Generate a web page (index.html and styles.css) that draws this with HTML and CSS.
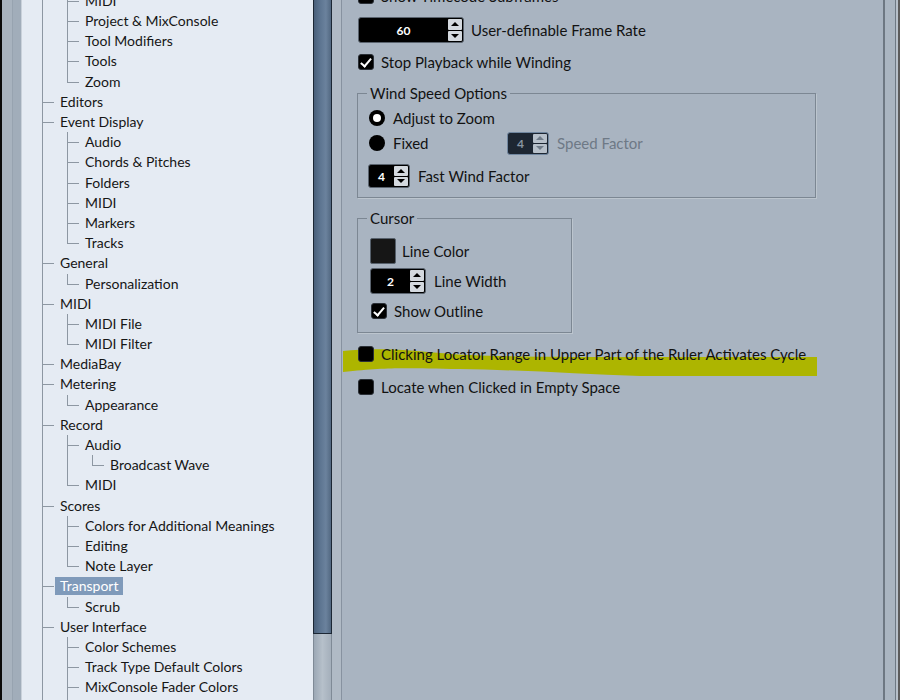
FILE: index.html
```html
<!DOCTYPE html>
<html>
<head>
  <meta charset="utf-8">
  <title>Preferences - Transport</title>
  <link rel="stylesheet" href="styles.css">
</head>
<body>
<div class="window">
  <div class="edge-left"></div>

  <div class="tree-pane">
    <ul class="tree">
      <li><span class="label">Editing</span>
        <ul>
          <li><span class="label">Controls</span></li>
          <li><span class="label">MIDI</span></li>
          <li><span class="label">Project &amp; MixConsole</span></li>
          <li><span class="label">Tool Modifiers</span></li>
          <li><span class="label">Tools</span></li>
          <li><span class="label">Zoom</span></li>
        </ul>
      </li>
      <li><span class="label">Editors</span></li>
      <li><span class="label">Event Display</span>
        <ul>
          <li><span class="label">Audio</span></li>
          <li><span class="label">Chords &amp; Pitches</span></li>
          <li><span class="label">Folders</span></li>
          <li><span class="label">MIDI</span></li>
          <li><span class="label">Markers</span></li>
          <li><span class="label">Tracks</span></li>
        </ul>
      </li>
      <li><span class="label">General</span>
        <ul>
          <li><span class="label">Personalization</span></li>
        </ul>
      </li>
      <li><span class="label">MIDI</span>
        <ul>
          <li><span class="label">MIDI File</span></li>
          <li><span class="label">MIDI Filter</span></li>
        </ul>
      </li>
      <li><span class="label">MediaBay</span></li>
      <li><span class="label">Metering</span>
        <ul>
          <li><span class="label">Appearance</span></li>
        </ul>
      </li>
      <li><span class="label">Record</span>
        <ul>
          <li><span class="label">Audio</span>
            <ul>
              <li><span class="label">Broadcast Wave</span></li>
            </ul>
          </li>
          <li><span class="label">MIDI</span></li>
        </ul>
      </li>
      <li><span class="label">Scores</span>
        <ul>
          <li><span class="label">Colors for Additional Meanings</span></li>
          <li><span class="label">Editing</span></li>
          <li><span class="label">Note Layer</span></li>
        </ul>
      </li>
      <li><span class="label selected">Transport</span>
        <ul>
          <li><span class="label">Scrub</span></li>
        </ul>
      </li>
      <li><span class="label">User Interface</span>
        <ul>
          <li><span class="label">Color Schemes</span></li>
          <li><span class="label">Track Type Default Colors</span></li>
          <li><span class="label">MixConsole Fader Colors</span></li>
          <li><span class="label">Work Window Colors</span></li>
        </ul>
      </li>
      <li><span class="label">VST</span></li>
    </ul>
  </div>

  <div class="vscroll">
    <div class="track">
      <div class="thumb"></div>
      <div class="rail"></div>
    </div>
    <div class="gutter"></div>
  </div>

  <div class="settings">
    <!-- marker stroke under the cycle option -->
    <svg class="marker" width="541" height="400" viewBox="342 0 541 400">
      <path d="M343 351 C370 348 400 349 440 353 S560 357 640 357 L817 357 L817 376 L640 376 C580 374 520 370 460 369 S390 367 343 372 Z" fill="#adb500"/>
    </svg>

    <div class="rows">
      <div class="row check-row">
        <span class="check"></span>
        <span>Show Timecode Subframes</span>
      </div>

      <div class="row spin-row">
        <div class="spin frame-rate">
          <span class="val">60</span>
          <span class="arrows"><i class="up"></i><i class="down"></i></span>
        </div>
        <span>User-definable Frame Rate</span>
      </div>

      <div class="row check-row stop-row">
        <span class="check on"></span>
        <span>Stop Playback while Winding</span>
      </div>

      <div class="group wind">
        <div class="group-title">Wind Speed Options</div>
        <div class="row radio-row first">
          <span class="radio on"></span>
          <span>Adjust to Zoom</span>
        </div>
        <div class="row radio-row">
          <div class="radio-cell">
            <span class="radio"></span>
            <span>Fixed</span>
          </div>
          <div class="spin small disabled">
            <span class="val">4</span>
            <span class="arrows"><i class="up"></i><i class="down"></i></span>
          </div>
          <span class="muted">Speed Factor</span>
        </div>
        <div class="row fast-row">
          <div class="spin small">
            <span class="val">4</span>
            <span class="arrows"><i class="up"></i><i class="down"></i></span>
          </div>
          <span>Fast Wind Factor</span>
        </div>
      </div>

      <div class="group cursor">
        <div class="group-title">Cursor</div>
        <div class="row swatch-row">
          <span class="swatch"></span>
          <span>Line Color</span>
        </div>
        <div class="row width-row">
          <div class="spin line-width">
            <span class="val">2</span>
            <span class="arrows"><i class="up"></i><i class="down"></i></span>
          </div>
          <span>Line Width</span>
        </div>
        <div class="row check-row outline-row">
          <span class="check on"></span>
          <span>Show Outline</span>
        </div>
      </div>

      <div class="row check-row cycle-row">
        <span class="check"></span>
        <span>Clicking Locator Range in Upper Part of the Ruler Activates Cycle</span>
      </div>

      <div class="row check-row locate-row">
        <span class="check"></span>
        <span>Locate when Clicked in Empty Space</span>
      </div>
    </div>
  </div>

  <div class="edge-right"></div>
</div>
</body>
</html>
```

FILE: styles.css
```css
html, body {
  margin: 0;
  padding: 0;
}
body {
  width: 900px;
  height: 700px;
  overflow: hidden;
  font-family: Lato, "Liberation Sans", sans-serif;
  font-size: 15px;
  color: #121212;
}
.window {
  display: flex;
  height: 700px;
}

/* window frame edges */
.edge-left {
  width: 22px;
  flex: none;
  background: linear-gradient(to right, #0b0b0b 0 2px, #a8b3bf 2px 12px, #97a3b0 12px 13px, #a1adba 13px 21px, #c9d1da 21px 22px);
}
.edge-right {
  width: 17px;
  flex: none;
  background: linear-gradient(to right, #6d7782 0 2px, #aab5c1 2px 12px, #6e7984 12px 13px, #b7c0ca 13px 15px, #5c5c5c 15px 17px);
}

/* category tree */
.tree-pane {
  width: 291px;
  flex: none;
  background: #e5ebf3;
  overflow: hidden;
  font-size: 14px;
  color: #161616;
}
.tree, .tree ul {
  list-style: none;
  margin: 0;
  padding: 0;
}
.tree {
  margin-top: -49.5px;
  padding-left: 20px;
}
.tree ul {
  padding-left: 7px;
}
.tree li {
  position: relative;
  padding-left: 18px;
}
.tree li::before {
  content: '';
  position: absolute;
  left: 0;
  top: 0;
  bottom: 0;
  border-left: 1px solid #8d97a2;
}
.tree li:last-child::before {
  bottom: auto;
  height: 10px;
}
.tree li::after {
  content: '';
  position: absolute;
  left: 0;
  top: 10px;
  width: 12px;
  border-top: 1px solid #8d97a2;
}
.label {
  display: inline-block;
  height: 20.2px;
  line-height: 20.2px;
  white-space: nowrap;
}
.label.selected {
  background: #7f9aba;
  color: #fff;
  margin-left: -5px;
  padding: 0 5px;
  height: 18px;
  line-height: 18px;
  margin-top: 1px;
  margin-bottom: 1.2px;
  vertical-align: top;
}

/* tree scrollbar */
.vscroll {
  width: 29px;
  flex: none;
  display: flex;
}
.track {
  width: 19px;
  display: flex;
  flex-direction: column;
}
.thumb {
  height: 634px;
  box-sizing: border-box;
  border: 1px solid #1c2734;
  border-top: none;
  background: linear-gradient(to right, #4a607a, #5c7490 35%, #6b829d 70%, #526881);
}
.rail {
  flex: 1;
  border-left: 1px solid #7f8a96;
  border-right: 1px solid #7f8a96;
  background: linear-gradient(to right, #9ca8b5, #b6c0ca 50%, #a4afbb);
}
.gutter {
  width: 9px;
  border-right: 1px solid #8792a0;
  background: #b0bac5;
}

/* settings page */
.settings {
  width: 541px;
  flex: none;
  position: relative;
  z-index: 0;
  background: #a9b4c1;
  overflow: hidden;
}
.marker {
  position: absolute;
  left: 0;
  top: 0;
  z-index: -1;
}
.rows {
  margin-top: -12px;
  padding-left: 16px;
}
.row {
  display: flex;
  align-items: center;
  gap: 7px;
  white-space: nowrap;
}
.check-row {
  height: 16px;
}
.spin-row {
  height: 26px;
  margin-top: 13px;
}
.stop-row {
  margin-top: 11px;
}

.check {
  width: 16px;
  height: 16px;
  flex: none;
  box-sizing: border-box;
  background: #000;
  border: 1px solid #2a2f36;
  border-radius: 3px;
  position: relative;
}
.check.on::after {
  content: '';
  position: absolute;
  left: 4px;
  top: 1px;
  width: 4px;
  height: 9px;
  border-right: 2px solid #fff;
  border-bottom: 2px solid #fff;
  transform: rotate(40deg);
}

/* spin boxes */
.spin {
  display: flex;
  height: 26px;
  flex: none;
  box-sizing: border-box;
  background: #000;
  border: 1px solid #5a636e;
  border-radius: 3px;
  color: #fff;
  font-weight: 700;
  font-size: 12px;
}
.spin .val {
  flex: 1;
  display: flex;
  align-items: center;
  justify-content: center;
}
.arrows {
  width: 14px;
  display: flex;
  flex-direction: column;
  gap: 1px;
  padding: 1px 1px 1px 0;
}
.arrows i {
  flex: 1;
  display: flex;
  align-items: center;
  justify-content: center;
  background: #d4d9df;
  border-radius: 1px;
}
.arrows .up::after {
  content: '';
  border-left: 4px solid transparent;
  border-right: 4px solid transparent;
  border-bottom: 4px solid #000;
}
.arrows .down::after {
  content: '';
  border-left: 4px solid transparent;
  border-right: 4px solid transparent;
  border-top: 4px solid #000;
}
.frame-rate {
  width: 106px;
}
.spin.small {
  width: 42px;
  height: 24px;
}
.spin.disabled {
  height: 23px;
  background: #1d2632;
  border-color: #7187a0;
  color: #8894a2;
}
.spin.disabled .arrows i {
  background: #b7c0ca;
}
.spin.disabled .arrows .up::after {
  border-bottom-color: #6f7b88;
}
.spin.disabled .arrows .down::after {
  border-top-color: #6f7b88;
}
.line-width {
  width: 56px;
}
.muted {
  color: #6e7986;
}

/* group boxes */
.group {
  margin-left: -1px;
  border: 1px solid #7c8793;
  box-shadow: 1px 1px 0 #bcc5ce;
  padding: 0 0 0 12px;
}
.group-title {
  width: fit-content;
  height: 20px;
  line-height: 20px;
  margin: -11px 0 0 -3px;
  padding: 0 3px;
  background: #a9b4c1;
}
.wind {
  width: 445px;
  margin-top: 23px;
  padding-bottom: 9px;
}
.radio-row {
  height: 24px;
  margin-top: 1px;
  margin-left: -1px;
  gap: 8px;
}
.radio-row.first {
  margin-top: 3px;
}
.radio-cell {
  width: 130px;
  display: flex;
  align-items: center;
  gap: 8px;
}
.radio {
  width: 16px;
  height: 16px;
  flex: none;
  border-radius: 50%;
  background: #000;
  position: relative;
}
.radio.on::after {
  content: '';
  position: absolute;
  left: 4px;
  top: 4px;
  width: 8px;
  height: 8px;
  border-radius: 50%;
  background: #fff;
}
.fast-row {
  height: 24px;
  margin-top: 9px;
  margin-left: -2px;
  gap: 8px;
}

.cursor {
  width: 201px;
  margin-top: 20px;
  padding-bottom: 13px;
}
.swatch-row {
  height: 26px;
  margin-top: 10px;
  gap: 6px;
}
.swatch {
  width: 26px;
  height: 26px;
  box-sizing: border-box;
  background: #161616;
  border: 1px solid #56606b;
  border-radius: 2px;
}
.width-row {
  height: 26px;
  margin-top: 4px;
  gap: 8px;
}
.outline-row {
  margin-top: 9px;
  margin-left: 1px;
}

.cycle-row {
  margin-top: 13px;
}
.locate-row {
  margin-top: 17px;
}
```
